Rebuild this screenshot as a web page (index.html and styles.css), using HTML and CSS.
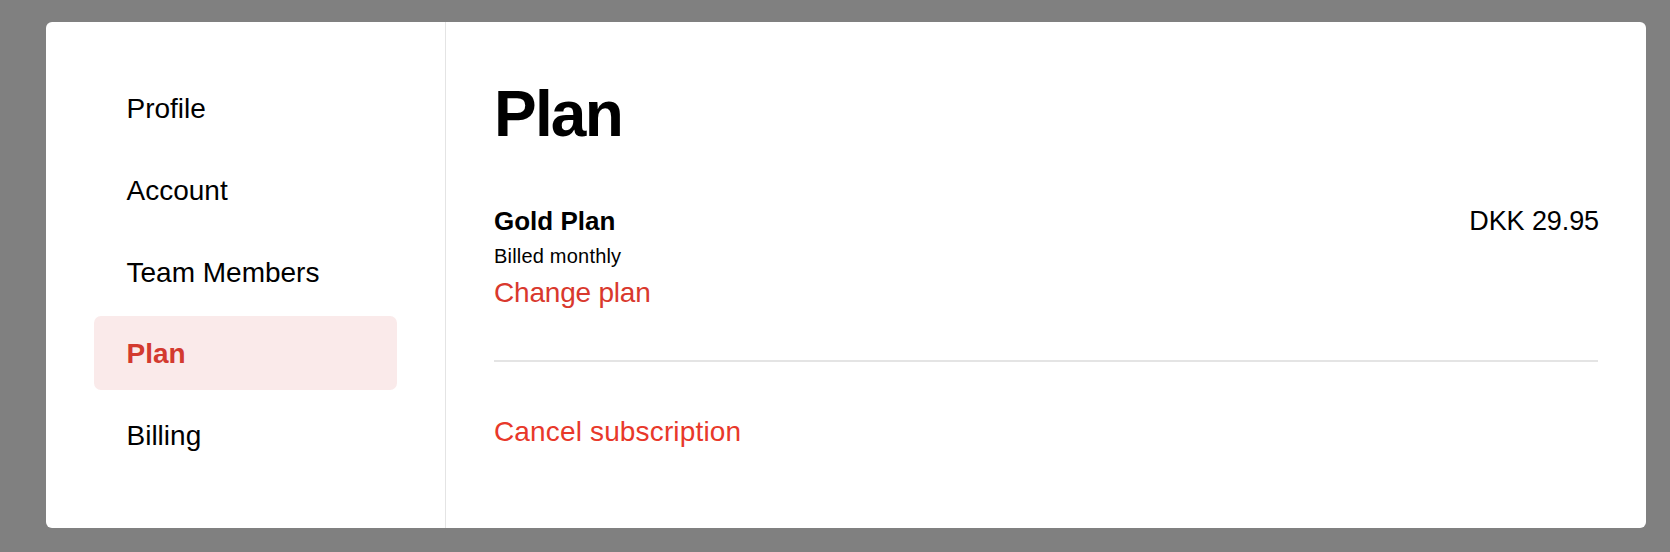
FILE: index.html
```html
<!DOCTYPE html>
<html lang="en">
<head>
<meta charset="utf-8">
<title>Plan</title>
<link rel="stylesheet" href="styles.css">
</head>
<body>
<div class="card">
  <nav class="sidebar">
    <a class="nav-item">Profile</a>
    <a class="nav-item">Account</a>
    <a class="nav-item">Team Members</a>
    <a class="nav-item active">Plan</a>
    <a class="nav-item">Billing</a>
  </nav>
  <main class="content">
    <h1 class="title">Plan</h1>
    <div class="plan-row">
      <div class="plan-info">
        <div class="plan-name">Gold Plan</div>
        <div class="plan-period">Billed monthly</div>
        <a class="link change">Change plan</a>
      </div>
      <div class="plan-price">DKK 29.95</div>
    </div>
    <hr class="divider">
    <a class="link cancel">Cancel subscription</a>
  </main>
</div>
</body>
</html>
```

FILE: styles.css
```css
* { box-sizing: border-box; }
html, body { height: 100%; }
body {
  margin: 0;
  background: #808080;
  padding: 22px 24px 24px 46px;
  font-family: "Liberation Sans", Arial, sans-serif;
  color: #000;
}
.card {
  display: flex;
  height: 506px;
  background: #fff;
  border-radius: 6px;
  overflow: hidden;
}
.sidebar {
  width: 400px;
  flex: none;
  padding: 48.5px 48px 0 48px;
  border-right: 1px solid #e4e4e4;
  display: flex;
  flex-direction: column;
  gap: 8px;
}
.nav-item {
  display: block;
  height: 73.75px;
  padding: 22.5px 32px 0 32.5px;
  font-size: 28px;
  line-height: 32px;
  color: #000;
  border-radius: 7px;
}
.nav-item.active {
  background: #faeaea;
  color: #d33a2f;
  font-weight: bold;
}
.content {
  flex: 1;
  padding: 60px 48px 0 48px;
}
.title {
  margin: 0;
  font-size: 64px;
  line-height: 64px;
  font-weight: bold;
  letter-spacing: -1.8px;
}
.plan-row {
  display: flex;
  justify-content: space-between;
  align-items: flex-start;
  margin-top: 59px;
}
.plan-info {
  display: flex;
  flex-direction: column;
}
.plan-name {
  font-size: 26px;
  line-height: 32px;
  font-weight: bold;
  letter-spacing: 0;
}
.plan-period {
  margin-top: 7.4px;
  font-size: 20px;
  line-height: 24px;
  letter-spacing: 0.2px;
}
.link {
  display: block;
  font-size: 28px;
  line-height: 34px;
  cursor: pointer;
}
.change {
  margin-top: 7.6px;
  color: #d9382d;
  letter-spacing: -0.2px;
}
.plan-price {
  font-size: 27px;
  line-height: 32px;
  letter-spacing: -0.1px;
  margin-right: -1px;
}
.divider {
  margin: 50px 0 0 0;
  border: 0;
  height: 2px;
  background: #e4e4e4;
}
.cancel {
  margin-top: 53px;
  color: #e8382a;
  letter-spacing: 0.15px;
}
```
